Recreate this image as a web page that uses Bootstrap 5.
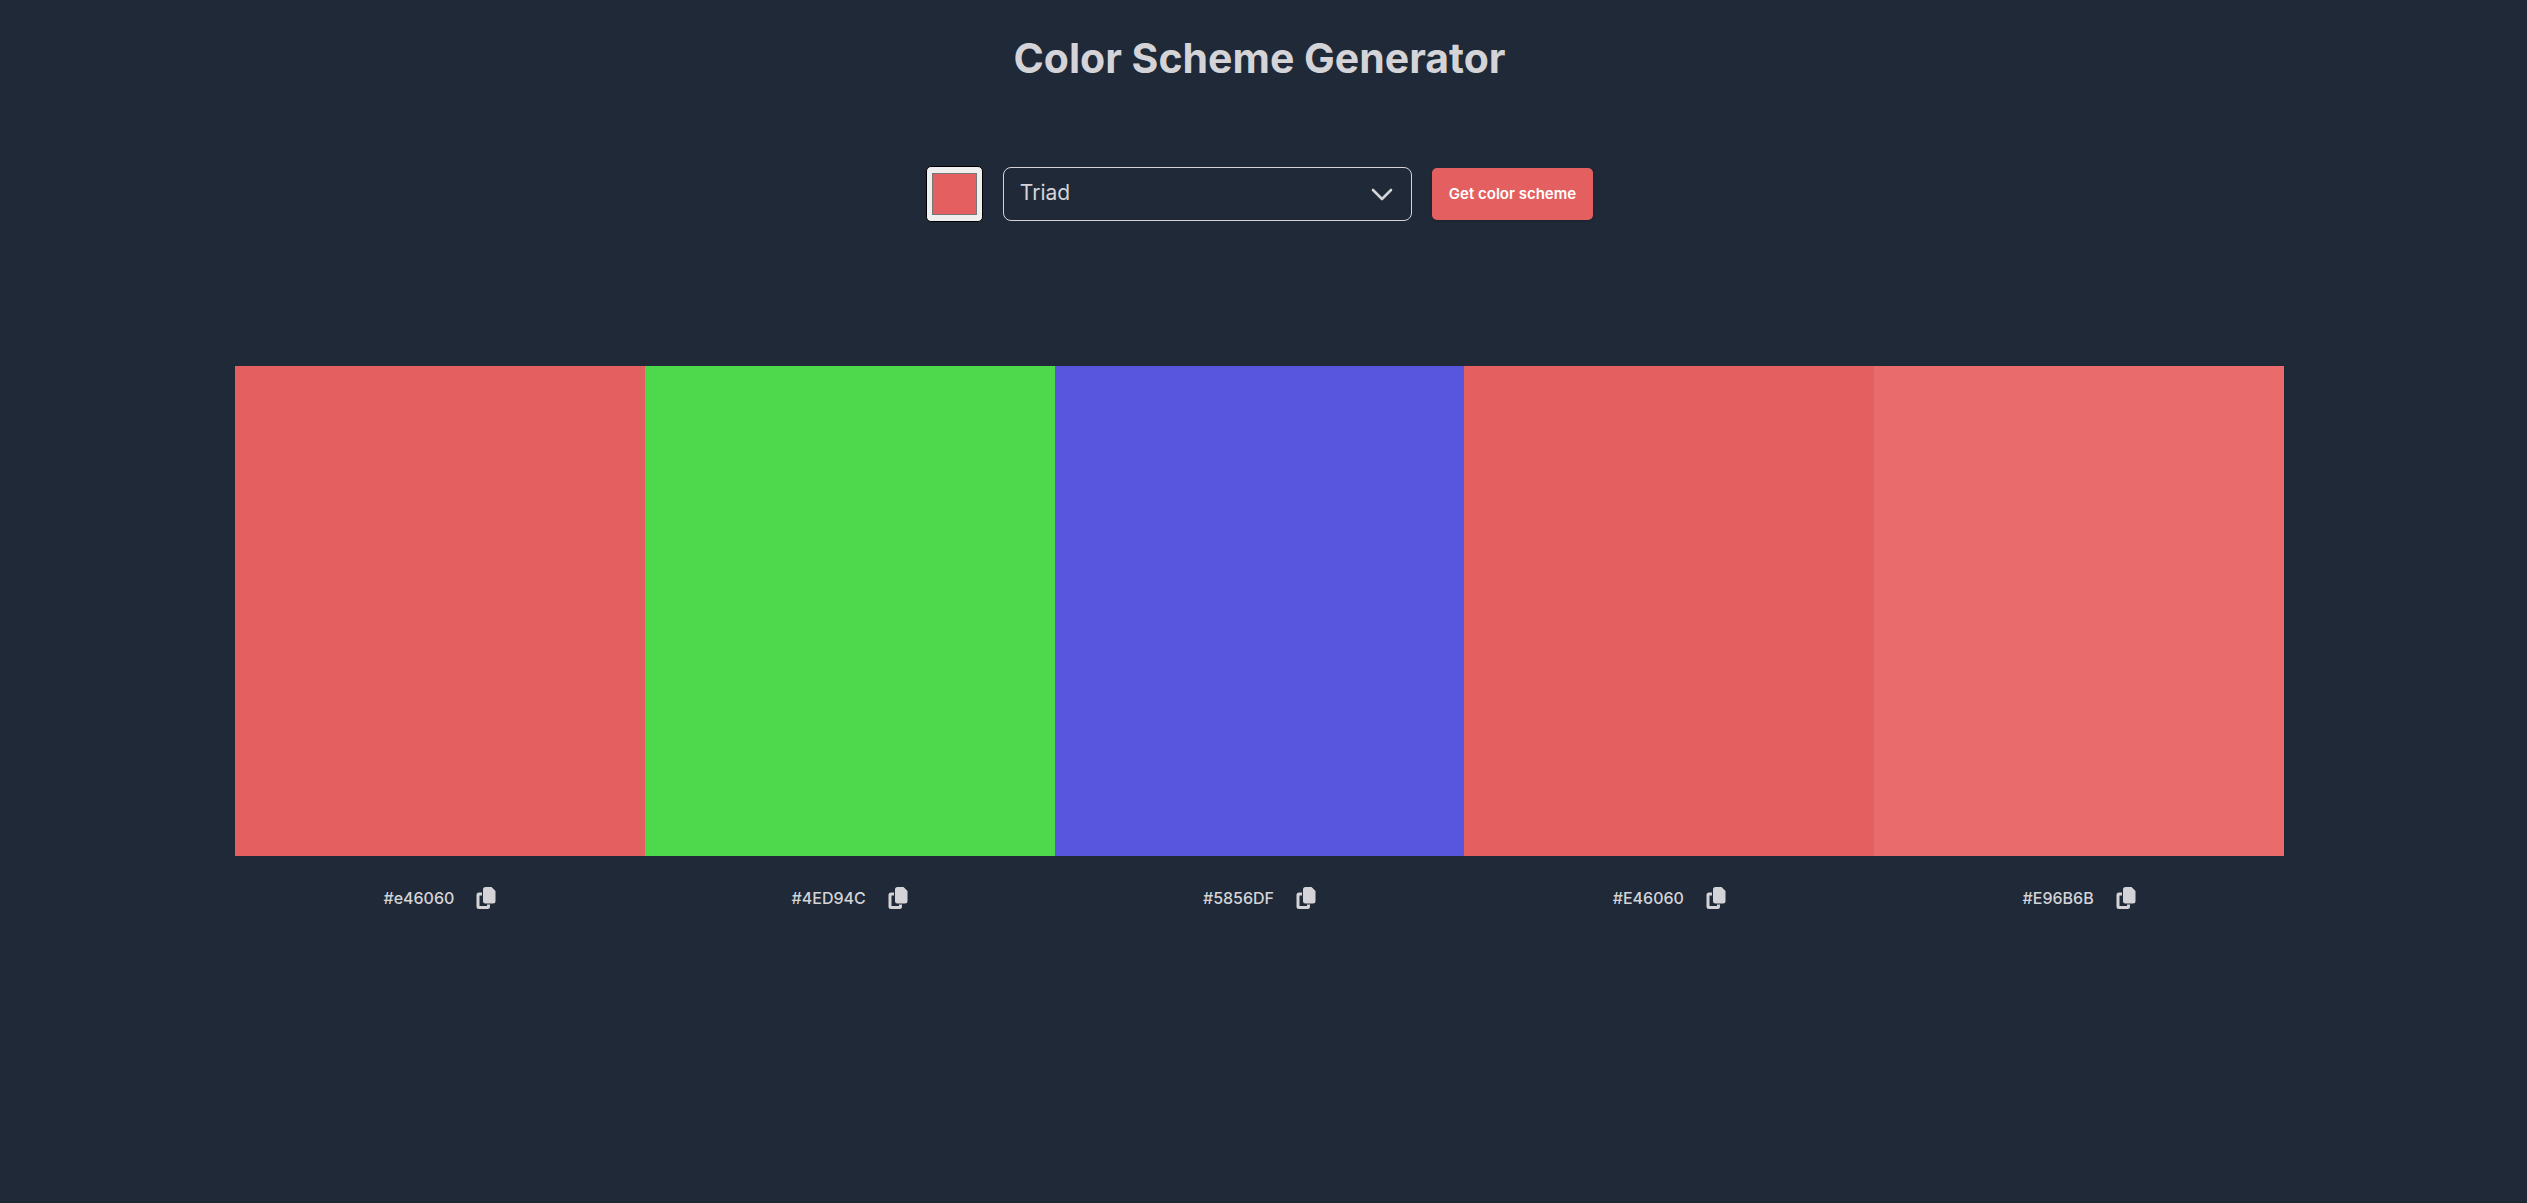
<!DOCTYPE html>
<html lang="en">
<head>
<meta charset="utf-8">
<meta name="viewport" content="width=device-width, initial-scale=1">
<title>Color Scheme Generator</title>
<link href="https://cdn.jsdelivr.net/npm/bootstrap@5.3.0/dist/css/bootstrap.min.css" rel="stylesheet">
<style>
body { background: #1f2937; color: #d4d4d8; font-family: Inter, sans-serif; padding-right: 8px; border-bottom: 1px solid #1c2133; }
h1 { font-size: 41px; line-height: 52px; }
.controls { margin-top: 82px; gap: 20px; }
.picker { width: 57px; height: 56px; padding: 4px 3px; background: #efefef; border: 1px solid #000; border-radius: 5px; cursor: pointer; }
.picker::-webkit-color-swatch-wrapper { padding: 2px; }
.picker::-webkit-color-swatch { border: 1px solid #777; border-radius: 0; }
.mode-wrap { width: 409px; max-width: 100%; }
.mode { height: 54px; padding: 0 48px 2px 16px; font-size: 21px; line-height: 28px; color: #d4d4d8; background: transparent; border: 1px solid #d4d4d8; border-radius: 8px; appearance: none; }
.mode option { background: #1f2937; }
.chevron { right: 18px; pointer-events: none; }
.btn-scheme { height: 52px; padding: 0 17px; font-size: 15px; font-weight: 600; color: #fff; background: #e46060; border: 0; border-radius: 5px; box-shadow: 0 1px 2px rgba(0, 0, 0, .2); }
.btn-scheme:hover { color: #fff; background: #d95454; }
.palette { max-width: 2049px; margin-top: 144px; }
.tone { height: 490px; }
.code { margin-top: 30px; gap: 22px; font-size: 16px; line-height: 24px; font-weight: 500; }
.copy { color: inherit; line-height: 1; }
</style>
</head>
<body class="min-vh-100">
<header class="text-center pt-3">
<h1 class="fw-bold mt-3 mb-0">Color Scheme Generator</h1>
</header>
<main>
<form class="controls d-flex flex-wrap justify-content-center align-items-center">
<input class="picker" type="color" value="#e46060" aria-label="Seed color">
<div class="mode-wrap position-relative d-flex align-items-center">
<select class="mode w-100" aria-label="Scheme mode">
<option>Monochrome</option><option>Analogic</option><option>Complement</option><option selected>Triad</option><option>Quad</option>
</select>
<svg class="chevron position-absolute" width="24" height="14" viewBox="0 0 24 14" fill="none" stroke="#d4d4d8" stroke-width="2.6" stroke-linecap="round" stroke-linejoin="round" aria-hidden="true"><path d="M3 3l9 9 9-9"/></svg>
</div>
<button class="btn btn-scheme" type="button">Get color scheme</button>
</form>
<section class="palette d-flex mx-auto" id="palette" aria-label="Generated colors"></section>
</main>
<script src="https://cdn.jsdelivr.net/npm/bootstrap@5.3.0/dist/js/bootstrap.bundle.min.js"></script>
<script>
const colors = ["#e46060", "#4ED94C", "#5856DF", "#E46060", "#E96B6B"];
document.getElementById("palette").innerHTML = colors.map(c => `
<div class="flex-fill w-100">
<div class="tone" style="background-color:${c}"></div>
<div class="code d-flex justify-content-center align-items-center">
<span>${c}</span>
<button class="copy btn p-0 border-0 d-flex" type="button" aria-label="Copy ${c}"><svg width="20" height="22" viewBox="0 0 20 22" fill="currentColor" aria-hidden="true"><path d="M9.500 0h6l4 4v10a2.500 2.500 0 0 1-2.500 2.500h-7.500a2.500 2.500 0 0 1-2.500-2.500v-11.500a2.500 2.500 0 0 1 2.500-2.500z"/><path d="M3 5.500h3v3h-2.500v10.500h7.500v-1.500h3v2a2.500 2.500 0 0 1-2.500 2.500h-8.500a2.500 2.500 0 0 1-2.500-2.500v-11.500a2.500 2.500 0 0 1 2.500-2.500z"/></svg></button>
</div>
</div>`).join("");
</script>
</body>
</html>
